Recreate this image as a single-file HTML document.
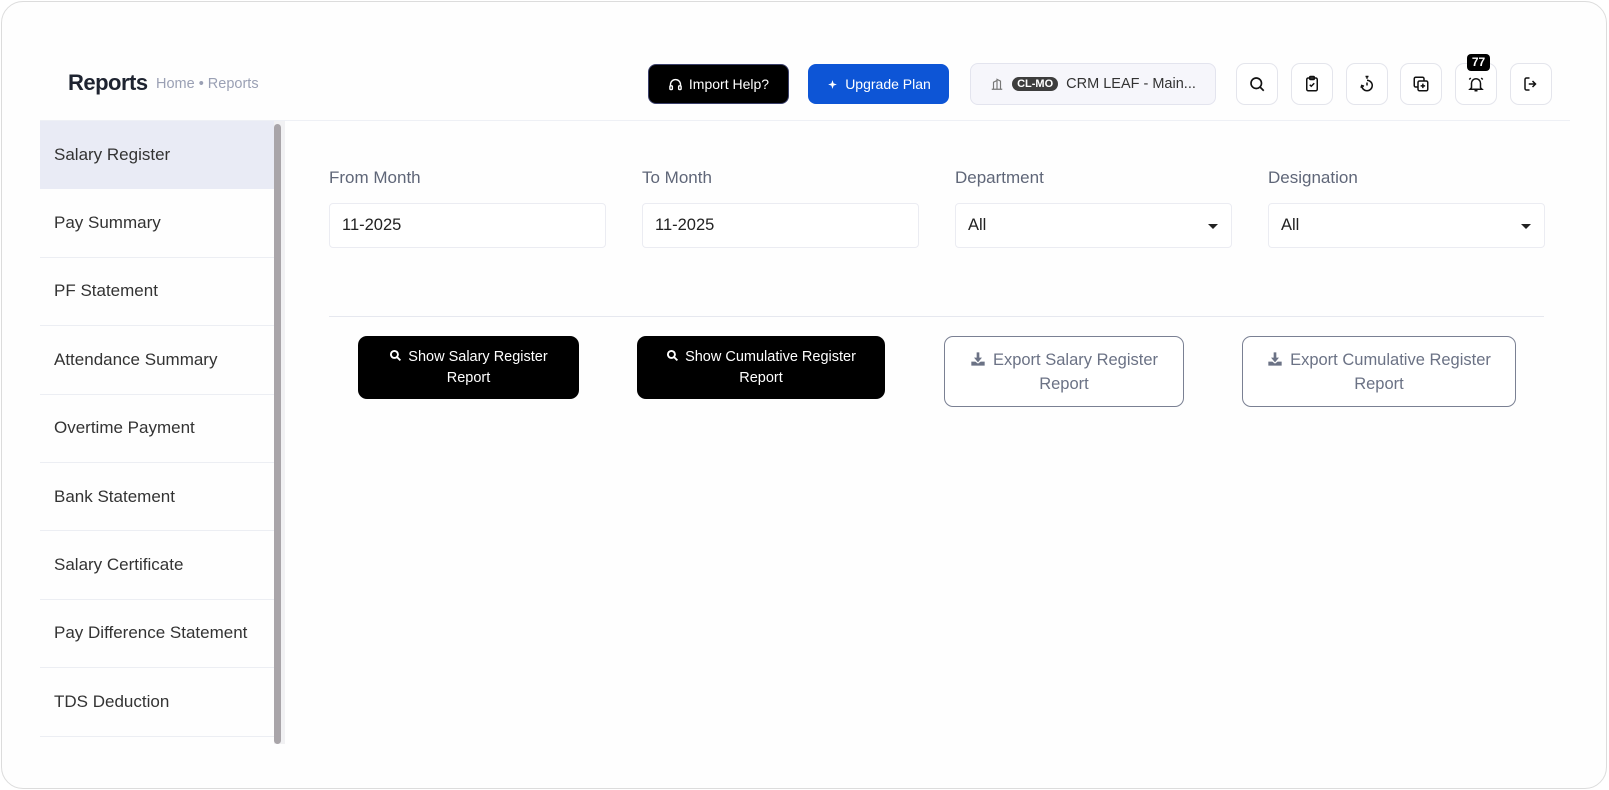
<!DOCTYPE html>
<html><head><meta charset="utf-8"><style>
*{box-sizing:border-box;margin:0;padding:0}
body{width:1609px;height:790px;background:#fff;font-family:"Liberation Sans",sans-serif;position:relative;overflow:hidden}
.frame{position:absolute;left:1px;top:1px;width:1606px;height:788px;border:1.5px solid #dcdcdc;border-radius:22px;background:#fefefe}
.abs{position:absolute}
.title{left:68px;top:70px;font-size:22px;font-weight:bold;color:#1e2330;letter-spacing:-0.5px}
.bc{left:156px;top:76px;font-size:14.5px;color:#9aa0b4}
.btn{display:flex;align-items:center;justify-content:center;gap:6px;font-size:14px;border-radius:8px}
.ib{width:42px;height:42px;top:63px;border:1px solid #e4e5ec;border-radius:9px;background:#fff;display:flex;align-items:center;justify-content:center}
.side{left:40px;top:121px;width:234px}
.item{height:68.4px;border-bottom:1px solid #eceef3;display:flex;align-items:center;padding-left:14px;font-size:17px;color:#333}
.item.sel{background:#e9ebf5;border-bottom:none}
.lbl{font-size:17px;color:#5f6678;top:168px}
.inp{top:203px;width:277px;height:45px;border:1px solid #ebecf2;border-radius:4px;background:#fff;font-size:16.5px;color:#222;display:flex;align-items:center;padding-left:12px}
.caret{position:absolute;right:13px;top:20px;border-left:5px solid transparent;border-right:5px solid transparent;border-top:5px solid #222}
.bk{top:336px;height:63px;background:#000;color:#fff;border-radius:9px;font-size:14.5px;text-align:center;line-height:21px;display:flex;align-items:center;justify-content:center}
.ex{top:336px;height:71px;background:#fff;color:#6b7285;border:1px solid #7a8093;border-radius:9px;font-size:16.5px;text-align:center;line-height:24px;display:flex;align-items:center;justify-content:center}
</style></head><body>
<div class="frame"></div>
<div class="abs title">Reports</div>
<div class="abs bc">Home • Reports</div>

<div class="abs btn" style="left:648px;top:64px;width:141px;height:40px;background:#000;color:#fff;border:1px solid #3a3f6a">
<svg width="15" height="15" viewBox="0 0 24 24" fill="none" stroke="#fff" stroke-width="2.2"><path d="M4 15v-3a8 8 0 0116 0v3"/><rect x="3" y="14" width="4" height="6" rx="1.5"/><rect x="17" y="14" width="4" height="6" rx="1.5"/></svg>Import Help?</div>
<div class="abs btn" style="left:808px;top:64px;width:141px;height:40px;background:#0d55d6;color:#fff">
<svg width="13" height="15" viewBox="0 0 24 24" fill="#fff"><path d="M12 4l2 6 6 2-6 2-2 6-2-6-6-2 6-2z"/></svg>Upgrade Plan</div>
<div class="abs btn" style="left:970px;top:63px;width:246px;height:42px;background:#f6f6fb;border:1px solid #e3e4ee;color:#333;font-size:14.5px;gap:8px">
<svg width="14" height="14" viewBox="0 0 24 24" fill="none" stroke="#777" stroke-width="2"><path d="M3 21h18M6 21V9l6-3v15M12 21V4l6 3v14"/></svg>
<span style="background:#3d3d3d;color:#fff;font-size:11px;font-weight:bold;border-radius:9px;padding:1px 5px">CL-MO</span>CRM LEAF - Main...</div>

<div class="abs ib" style="left:1236px"><svg width="18" height="18" viewBox="0 0 24 24" fill="none" stroke="#111" stroke-width="2.2"><circle cx="11" cy="11" r="7"/><path d="M16 16l5 5"/></svg></div>
<div class="abs ib" style="left:1291px"><svg width="18" height="18" viewBox="0 0 24 24" fill="none" stroke="#111" stroke-width="2"><rect x="5" y="4" width="14" height="17" rx="2"/><rect x="9" y="2" width="6" height="4" rx="1"/><path d="M9 13l2 2 4-4"/></svg></div>
<div class="abs ib" style="left:1346px"><svg width="18" height="18" viewBox="0 0 24 24" fill="none" stroke="#111" stroke-width="2"><path d="M10 2h4M12 2v3"/><path d="M5 14a7 7 0 107-7"/><path d="M12 10v4"/><path d="M4 17l1-3 3 1"/></svg></div>
<div class="abs ib" style="left:1400px"><svg width="18" height="18" viewBox="0 0 24 24" fill="none" stroke="#111" stroke-width="2"><rect x="8" y="8" width="13" height="13" rx="2"/><path d="M16 8V5a2 2 0 00-2-2H5a2 2 0 00-2 2v9a2 2 0 002 2h3M14.5 11.5v6M11.5 14.5h6"/></svg></div>
<div class="abs ib" style="left:1455px"><svg width="18" height="18" viewBox="0 0 24 24" fill="none" stroke="#111" stroke-width="2"><path d="M6 17V11a6 6 0 0112 0v6l2 2H4zM10 21h4M3 6l2-2M21 6l-2-2"/></svg></div>
<div class="abs" style="left:1467px;top:54px;width:23px;height:17px;background:#000;color:#fff;font-size:12px;font-weight:bold;border-radius:4px;text-align:center;line-height:17px">77</div>
<div class="abs ib" style="left:1510px"><svg width="18" height="18" viewBox="0 0 24 24" fill="none" stroke="#111" stroke-width="2"><path d="M10 4H6a2 2 0 00-2 2v12a2 2 0 002 2h4M14 8l4 4-4 4M18 12H9"/></svg></div>

<div class="abs" style="left:40px;top:120px;width:1530px;height:1px;background:#eef0f5"></div>

<div class="abs side">
<div class="item sel">Salary Register</div>
<div class="item">Pay Summary</div>
<div class="item">PF Statement</div>
<div class="item">Attendance Summary</div>
<div class="item">Overtime Payment</div>
<div class="item">Bank Statement</div>
<div class="item">Salary Certificate</div>
<div class="item">Pay Difference Statement</div>
<div class="item">TDS Deduction</div>
</div>
<div class="abs" style="left:274px;top:121px;width:11px;height:623px;background:#f1f1f3"></div>
<div class="abs" style="left:274px;top:124px;width:7px;height:620px;background:#a9a5a9;border-radius:4px"></div>

<div class="abs lbl" style="left:329px">From Month</div>
<div class="abs lbl" style="left:642px">To Month</div>
<div class="abs lbl" style="left:955px">Department</div>
<div class="abs lbl" style="left:1268px">Designation</div>
<div class="abs inp" style="left:329px">11-2025</div>
<div class="abs inp" style="left:642px">11-2025</div>
<div class="abs inp" style="left:955px">All<span class="caret"></span></div>
<div class="abs inp" style="left:1268px">All<span class="caret"></span></div>

<div class="abs" style="left:329px;top:316px;width:1215px;height:1px;background:#e6e8ef"></div>

<div class="abs bk" style="left:358px;width:221px"><div><svg width="13" height="13" viewBox="0 0 24 24" fill="none" stroke="#fff" stroke-width="3.5" style="vertical-align:-1px;margin-right:6px"><circle cx="10" cy="10" r="6.5"/><path d="M15 15l6 6"/></svg>Show Salary Register<br>Report</div></div>
<div class="abs bk" style="left:637px;width:248px"><div><svg width="13" height="13" viewBox="0 0 24 24" fill="none" stroke="#fff" stroke-width="3.5" style="vertical-align:-1px;margin-right:6px"><circle cx="10" cy="10" r="6.5"/><path d="M15 15l6 6"/></svg>Show Cumulative Register<br>Report</div></div>
<div class="abs ex" style="left:944px;width:240px"><div><svg width="16" height="16" viewBox="0 0 24 24" fill="#6b7285" style="vertical-align:-2px;margin-right:7px"><path d="M10 2h4v8h4l-6 7-6-7h4z"/><path d="M2 16h6l4 3 4-3h6v6H2z"/></svg>Export Salary Register<br>Report</div></div>
<div class="abs ex" style="left:1242px;width:274px"><div><svg width="16" height="16" viewBox="0 0 24 24" fill="#6b7285" style="vertical-align:-2px;margin-right:7px"><path d="M10 2h4v8h4l-6 7-6-7h4z"/><path d="M2 16h6l4 3 4-3h6v6H2z"/></svg>Export Cumulative Register<br>Report</div></div>
</body></html>
